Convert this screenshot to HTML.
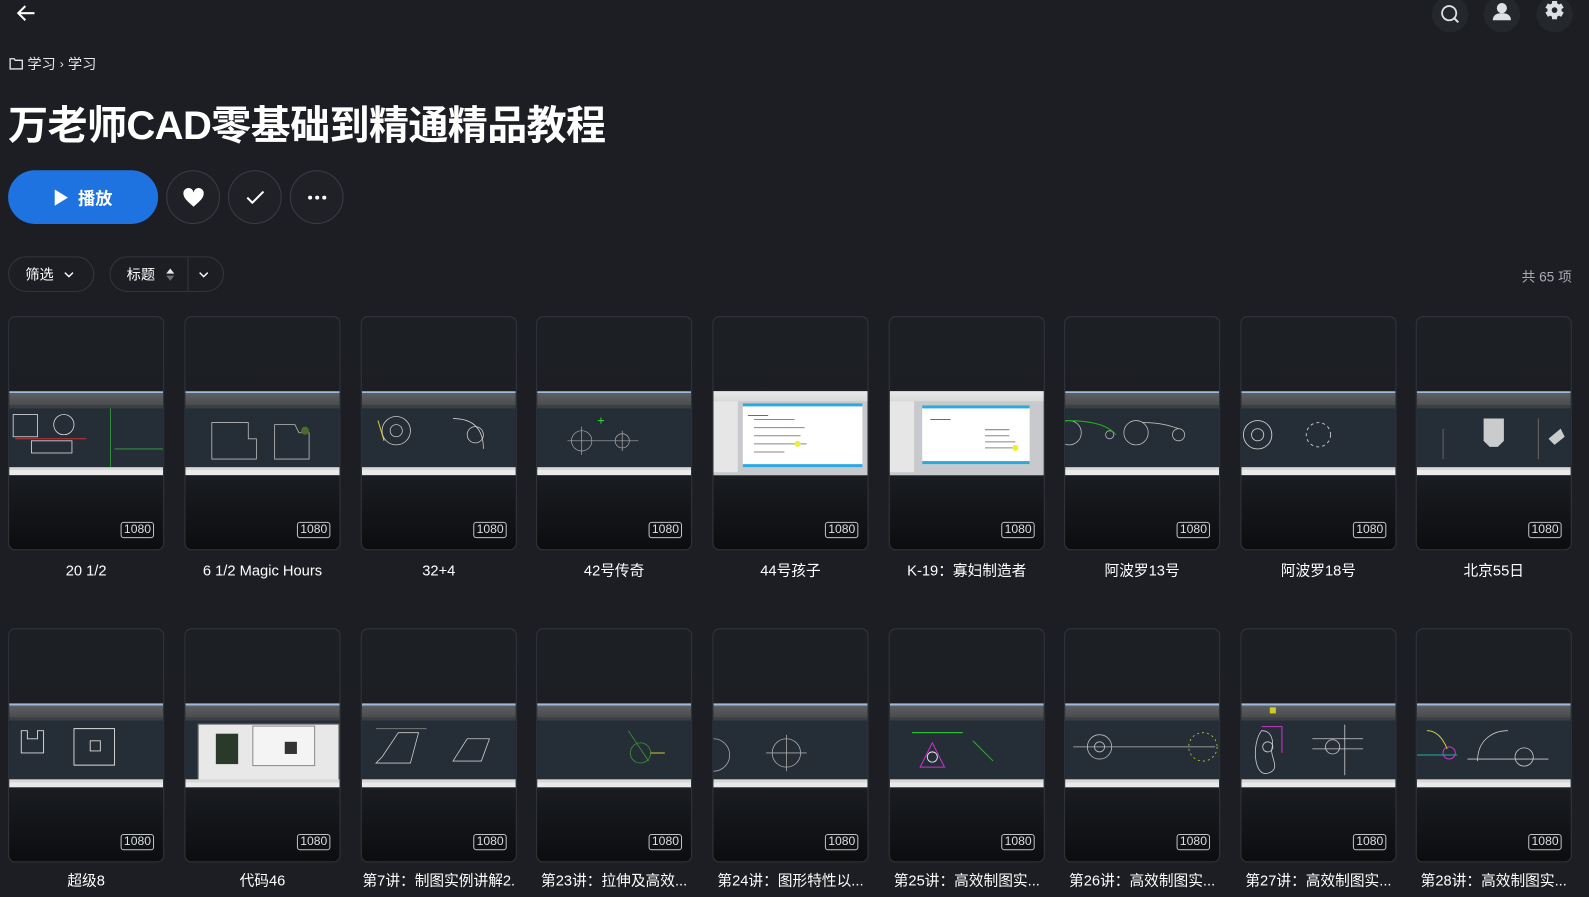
<!DOCTYPE html>
<html><head><meta charset="utf-8">
<style>
*{box-sizing:border-box;margin:0;padding:0}
html,body{width:1589px;height:897px;overflow:hidden;background:#1c1e23;color:#fff;font-family:"Liberation Sans","Noto Sans CJK SC",sans-serif}
#w{position:absolute;left:0;top:0;width:1568px;height:885px;transform:scale(1.0134);transform-origin:0 0}
.abs{position:absolute}
.circ{position:absolute;width:36px;height:36px;border-radius:50%;background:#24272c;top:-4px}
.crumb{position:absolute;left:9px;top:53px;font-size:14px;color:#e8e8e8;display:flex;align-items:center;gap:4px}
h1{position:absolute;left:8px;top:92px;font-size:39.5px;font-weight:700;letter-spacing:-0.6px;white-space:nowrap}
.play{position:absolute;left:8px;top:168px;width:148px;height:53px;border-radius:27px;background:#1f73e0;display:flex;align-items:center;justify-content:center;font-size:17px;font-weight:700;gap:10px}
.rb{position:absolute;top:168px;width:53px;height:53px;border-radius:50%;border:1px solid #3a3d44;background:#1f2126;display:flex;align-items:center;justify-content:center}
.pill{position:absolute;top:253px;height:35px;border:1px solid #34373d;border-radius:18px;display:flex;align-items:center;font-size:14px}
.count{position:absolute;right:17px;top:262px;font-size:13.5px;color:#a9adb3}
.card{position:absolute;width:154px;height:231px;border:1px solid #31353b;border-radius:7px;overflow:hidden;background:linear-gradient(#1c1f24 0%,#1b1e23 65%,#0c0d0f 100%)}
.img{position:absolute;left:0;top:73px;width:152px;height:83px;background:#252d36;overflow:hidden}
.img .tb{position:absolute;left:0;top:0;width:100%;height:14px;background:linear-gradient(#9fb9d8 0,#9fb9d8 2px,#5d5f62 2px,#4a4b4d 100%)}
.img .tb2{position:absolute;left:0;top:14px;width:100%;height:3px;background:#3a3f45}
.img .bt{position:absolute;left:0;bottom:0;width:100%;height:8px;background:linear-gradient(#d8d8d8 0,#d8d8d8 3px,#eaeaea 3px)}
.img svg{position:absolute;left:0;top:17px}
.wimg{background:#c7c9cc}
.wimg .tb{background:linear-gradient(#e9e9e9,#d9d9d9);height:10px}
.badge{position:absolute;right:9px;bottom:11px;border:1.5px solid #bfc2c6;border-radius:3px;font-size:12px;color:#dcdfe2;padding:0 2px;line-height:13px;height:16px}
.lab{position:absolute;width:154px;text-align:center;font-size:14.5px;line-height:20px;height:20px;color:#fff;white-space:nowrap;overflow:hidden}
</style></head><body><div id="w">
<svg class="abs" style="left:16px;top:4px" width="20" height="18" viewBox="0 0 20 18"><path d="M18 9H3M9 2L2 9l7 7" stroke="#fff" stroke-width="2" fill="none"/></svg>

<div class="circ" style="left:1413px"><svg width="36" height="36"><circle cx="17" cy="17" r="7" stroke="#dde1e6" stroke-width="1.8" fill="none"/><path d="M22 22l4 4" stroke="#dde1e6" stroke-width="2"/></svg></div>
<div class="circ" style="left:1464px"><svg width="36" height="36"><circle cx="18" cy="12" r="5" fill="#dde1e6"/><path d="M9 24c0-5 4-7 9-7s9 2 9 7z" fill="#dde1e6"/></svg></div>
<div class="circ" style="left:1516px"><svg width="36" height="36" viewBox="0 0 36 36"><g fill="#dde1e6"><circle cx="18" cy="14" r="7"/><g transform="translate(18 14)"><rect x="-2.5" y="-9" width="5" height="18"/><rect x="-2.5" y="-9" width="5" height="18" transform="rotate(60)"/><rect x="-2.5" y="-9" width="5" height="18" transform="rotate(120)"/></g></g><circle cx="18" cy="14" r="2.8" fill="#24272c"/></svg></div>

<div class="crumb"><svg width="14" height="12" viewBox="0 0 14 12"><path d="M1 1h4l1 1.5h7V11H1z" stroke="#e8e8e8" stroke-width="1.3" fill="none"/></svg><span>学习</span><span style="font-size:12px">›</span><span>学习</span></div>

<h1>万老师CAD零基础到精通精品教程</h1>

<div class="play"><svg width="14" height="16"><path d="M1 0L14 8 1 16z" fill="#fff"/></svg><span>播放</span></div>
<div class="rb" style="left:164px"><svg width="22" height="20" viewBox="0 0 22 20"><path d="M11 19C4 13 1 10 1 6a5 5 0 0 1 10-1 5 5 0 0 1 10 1c0 4-3 7-10 13z" fill="#fff"/></svg></div>
<div class="rb" style="left:225px"><svg width="18" height="14"><path d="M1 7l5 5L17 1" stroke="#fff" stroke-width="2" fill="none"/></svg></div>
<div class="rb" style="left:286px"><svg width="20" height="4"><circle cx="3" cy="2" r="2" fill="#fff"/><circle cx="10" cy="2" r="2" fill="#fff"/><circle cx="17" cy="2" r="2" fill="#fff"/></svg></div>

<div class="pill" style="left:8px;width:85px;padding-left:16px">筛选<svg style="margin-left:10px" width="10" height="6"><path d="M1 1l4 4 4-4" stroke="#fff" stroke-width="1.4" fill="none"/></svg></div>
<div class="pill" style="left:108px;width:113px;padding-left:16px">标题<svg style="margin-left:10px" width="10" height="14"><path d="M1 6l4-5 4 5z" fill="#e8e8e8"/><path d="M1 8l4 5 4-5z" fill="#6b6e73"/></svg><span style="position:absolute;left:76px;top:0;width:1px;height:33px;background:#34373d"></span><svg style="position:absolute;left:87px;top:14px" width="10" height="6"><path d="M1 1l4 4 4-4" stroke="#fff" stroke-width="1.4" fill="none"/></svg></div>
<div class="count">共 65 项</div>

<!-- Row 1 -->
<div class="card" style="left:8px;top:312px"><div class="img"><div class="tb"></div><div class="tb2"></div><svg width="152" height="58"><g stroke="#ddd" fill="none" stroke-width=".8"><rect x="4" y="6" width="24" height="22"/><circle cx="54" cy="16" r="10"/><rect x="22" y="32" width="40" height="12"/></g><path d="M100 0v58M104 40h48" stroke="#2f8f3a"/><path d="M6 30h70" stroke="#c33"/></svg><div class="bt"></div></div><div class="badge">1080</div></div>
<div class="card" style="left:182px;top:312px"><div class="img"><div class="tb"></div><div class="tb2"></div><svg width="152" height="58"><g stroke="#bbb" fill="none" stroke-width=".8"><path d="M26 14h36v16h8v20H26z"/><path d="M88 16h20l4 8h10v26H88z"/></g><circle cx="118" cy="22" r="4" fill="#4a6b2a"/></svg><div class="bt"></div></div><div class="badge">1080</div></div>
<div class="card" style="left:356px;top:312px"><div class="img"><div class="tb"></div><div class="tb2"></div><svg width="152" height="58"><g stroke="#ccc" fill="none" stroke-width=".8"><circle cx="34" cy="22" r="14"/><circle cx="34" cy="22" r="6"/><path d="M90 10c20 0 30 10 30 30"/><circle cx="112" cy="26" r="8"/></g><path d="M16 12l6 20" stroke="#cc3"/></svg><div class="bt"></div></div><div class="badge">1080</div></div>
<div class="card" style="left:529px;top:312px"><div class="img"><div class="tb"></div><div class="tb2"></div><svg width="152" height="58"><g stroke="#aaa" fill="none" stroke-width=".7"><circle cx="44" cy="32" r="10"/><circle cx="84" cy="32" r="7"/><path d="M30 32h70M44 18v28M84 22v20"/></g><path d="M60 12h6M63 9v6" stroke="#3c3"/></svg><div class="bt"></div></div><div class="badge">1080</div></div>
<div class="card" style="left:703px;top:312px"><div class="img wimg"><div class="tb"></div><div style="position:absolute;left:0;top:10px;width:24px;height:70px;background:#e6e6e6"></div><div style="position:absolute;left:29px;top:12px;width:118px;height:63px;background:#fff;border-top:3px solid #2aa8e0;border-bottom:3px solid #2aa8e0"></div><svg width="152" height="58" style="top:20px"><g stroke="#888" stroke-width="1"><path d="M40 8h40M40 16h50M40 24h46M40 32h52M40 40h30"/></g><path d="M34 4h20" stroke="#e33"/><circle cx="83" cy="32" r="3" fill="#ee3"/></svg></div><div class="badge">1080</div></div>
<div class="card" style="left:877px;top:312px"><div class="img wimg"><div class="tb"></div><div style="position:absolute;left:0;top:10px;width:24px;height:70px;background:#e6e6e6"></div><div style="position:absolute;left:32px;top:14px;width:106px;height:58px;background:#fff;border-top:3px solid #2aa8e0;border-bottom:3px solid #2aa8e0"></div><svg width="152" height="58" style="top:20px"><g stroke="#888" stroke-width="1"><path d="M94 18h24M94 24h24M94 30h30M94 36h30"/></g><path d="M40 8h20" stroke="#e33"/><circle cx="124" cy="36" r="3" fill="#ee3"/></svg></div><div class="badge">1080</div></div>
<div class="card" style="left:1050px;top:312px"><div class="img"><div class="tb"></div><div class="tb2"></div><svg width="152" height="58"><g stroke="#bbb" fill="none" stroke-width=".8"><circle cx="4" cy="24" r="12"/><circle cx="44" cy="26" r="4"/><circle cx="70" cy="24" r="12"/><circle cx="112" cy="26" r="6"/><path d="M76 14c20 0 30 4 36 6"/></g><path d="M0 12c30 0 44 6 50 14" stroke="#2a2" fill="none"/></svg><div class="bt"></div></div><div class="badge">1080</div></div>
<div class="card" style="left:1224px;top:312px"><div class="img"><div class="tb"></div><div class="tb2"></div><svg width="152" height="58"><g stroke="#ccc" fill="none" stroke-width=".9"><circle cx="16" cy="26" r="14"/><circle cx="16" cy="26" r="6"/><circle cx="76" cy="26" r="12" stroke-dasharray="3 3"/></g></svg><div class="bt"></div></div><div class="badge">1080</div></div>
<div class="card" style="left:1397px;top:312px"><div class="img"><div class="tb"></div><div class="tb2"></div><svg width="152" height="58"><path d="M66 10h20v22l-6 6h-8l-6-6z" fill="#c9cbcd"/><path d="M130 30l12-10 4 8-10 8z" fill="#c9cbcd"/><path d="M26 20v30M120 10v40" stroke="#666"/></svg><div class="bt"></div></div><div class="badge">1080</div></div>

<div class="lab" style="left:8px;top:554px">20 1/2</div>
<div class="lab" style="left:182px;top:554px">6 1/2 Magic Hours</div>
<div class="lab" style="left:356px;top:554px">32+4</div>
<div class="lab" style="left:529px;top:554px">42号传奇</div>
<div class="lab" style="left:703px;top:554px">44号孩子</div>
<div class="lab" style="left:877px;top:554px">K-19：寡妇制造者</div>
<div class="lab" style="left:1050px;top:554px">阿波罗13号</div>
<div class="lab" style="left:1224px;top:554px">阿波罗18号</div>
<div class="lab" style="left:1397px;top:554px">北京55日</div>

<!-- Row 2 -->
<div class="card" style="left:8px;top:620px"><div class="img"><div class="tb"></div><div class="tb2"></div><svg width="152" height="58"><g stroke="#ddd" fill="none" stroke-width=".9"><path d="M12 10h6v8h10v-8h6v22H12z"/><path d="M64 8h40v36H64z"/><path d="M80 20h10v10H80z"/></g></svg><div class="bt"></div></div><div class="badge">1080</div></div>
<div class="card" style="left:182px;top:620px"><div class="img"><div class="tb"></div><div class="tb2"></div><div style="position:absolute;left:12px;top:20px;width:140px;height:60px;background:#e8e8e8;border:1px solid #555"></div><div style="position:absolute;left:66px;top:22px;width:62px;height:40px;background:#f4f4f4;border:1px solid #888"></div><svg width="152" height="58" style="top:24px"><rect x="30" y="6" width="22" height="30" fill="#2a3a2a"/><rect x="98" y="14" width="12" height="12" fill="#333"/></svg><div class="bt"></div></div><div class="badge">1080</div></div>
<div class="card" style="left:356px;top:620px"><div class="img"><div class="tb"></div><div class="tb2"></div><svg width="152" height="58"><g stroke="#ccc" fill="none" stroke-width=".8"><path d="M20 36l16-24h20l-8 30H14z"/><path d="M90 40l14-22h22l-8 22z"/></g><path d="M14 8h50" stroke="#777"/></svg><div class="bt"></div></div><div class="badge">1080</div></div>
<div class="card" style="left:529px;top:620px"><div class="img"><div class="tb"></div><div class="tb2"></div><svg width="152" height="58"><g stroke="#3a8a3a" fill="none" stroke-width=".9"><circle cx="102" cy="32" r="10"/><path d="M90 10l20 30"/></g><path d="M112 32h14" stroke="#cc3"/></svg><div class="bt"></div></div><div class="badge">1080</div></div>
<div class="card" style="left:703px;top:620px"><div class="img"><div class="tb"></div><div class="tb2"></div><svg width="152" height="58"><g stroke="#aaa" fill="none" stroke-width=".8"><circle cx="0" cy="34" r="16"/><circle cx="72" cy="32" r="14"/><path d="M52 32h40M72 14v36"/></g></svg><div class="bt"></div></div><div class="badge">1080</div></div>
<div class="card" style="left:877px;top:620px"><div class="img"><div class="tb"></div><div class="tb2"></div><svg width="152" height="58"><path d="M22 12h50" stroke="#3c3"/><path d="M30 46l12-24 12 24z" fill="none" stroke="#c3c"/><circle cx="42" cy="36" r="5" fill="none" stroke="#ddd"/><path d="M82 20l20 20" stroke="#3a3"/></svg><div class="bt"></div></div><div class="badge">1080</div></div>
<div class="card" style="left:1050px;top:620px"><div class="img"><div class="tb"></div><div class="tb2"></div><svg width="152" height="58"><g stroke="#bbb" fill="none" stroke-width=".8"><circle cx="34" cy="26" r="12"/><circle cx="34" cy="26" r="5"/><circle cx="136" cy="26" r="14" stroke="#cc3" stroke-dasharray="2 3"/><path d="M8 26h140"/></g></svg><div class="bt"></div></div><div class="badge">1080</div></div>
<div class="card" style="left:1224px;top:620px"><div class="img"><div class="tb"><div style="position:absolute;left:28px;top:4px;width:6px;height:6px;background:#cc2"></div></div><div class="tb2"></div><svg width="152" height="58"><g stroke="#ccc" fill="none" stroke-width=".8"><path d="M20 10c10 0 12 10 10 18s10 20-4 24-16-30-6-42z"/><circle cx="26" cy="26" r="5"/><circle cx="90" cy="26" r="7"/><path d="M70 18h50M70 28h50M102 4v50"/></g><path d="M20 6h20v26" stroke="#c3c" fill="none"/></svg><div class="bt"></div></div><div class="badge">1080</div></div>
<div class="card" style="left:1397px;top:620px"><div class="img"><div class="tb"></div><div class="tb2"></div><svg width="152" height="58"><g stroke="#ccc" fill="none" stroke-width=".8"><path d="M60 40c0-20 14-30 30-30"/><circle cx="106" cy="36" r="9"/><path d="M50 38h80"/></g><circle cx="32" cy="32" r="6" fill="none" stroke="#c3c"/><path d="M0 34h40" stroke="#2aa"/><path d="M10 10c10 0 16 8 20 18" stroke="#cc3" fill="none"/></svg><div class="bt"></div></div><div class="badge">1080</div></div>

<div class="lab" style="left:8px;top:860px">超级8</div>
<div class="lab" style="left:182px;top:860px">代码46</div>
<div class="lab" style="left:356px;top:860px">第7讲：制图实例讲解2.</div>
<div class="lab" style="left:529px;top:860px">第23讲：拉伸及高效...</div>
<div class="lab" style="left:703px;top:860px">第24讲：图形特性以...</div>
<div class="lab" style="left:877px;top:860px">第25讲：高效制图实...</div>
<div class="lab" style="left:1050px;top:860px">第26讲：高效制图实...</div>
<div class="lab" style="left:1224px;top:860px">第27讲：高效制图实...</div>
<div class="lab" style="left:1397px;top:860px">第28讲：高效制图实...</div>
</div></body></html>
